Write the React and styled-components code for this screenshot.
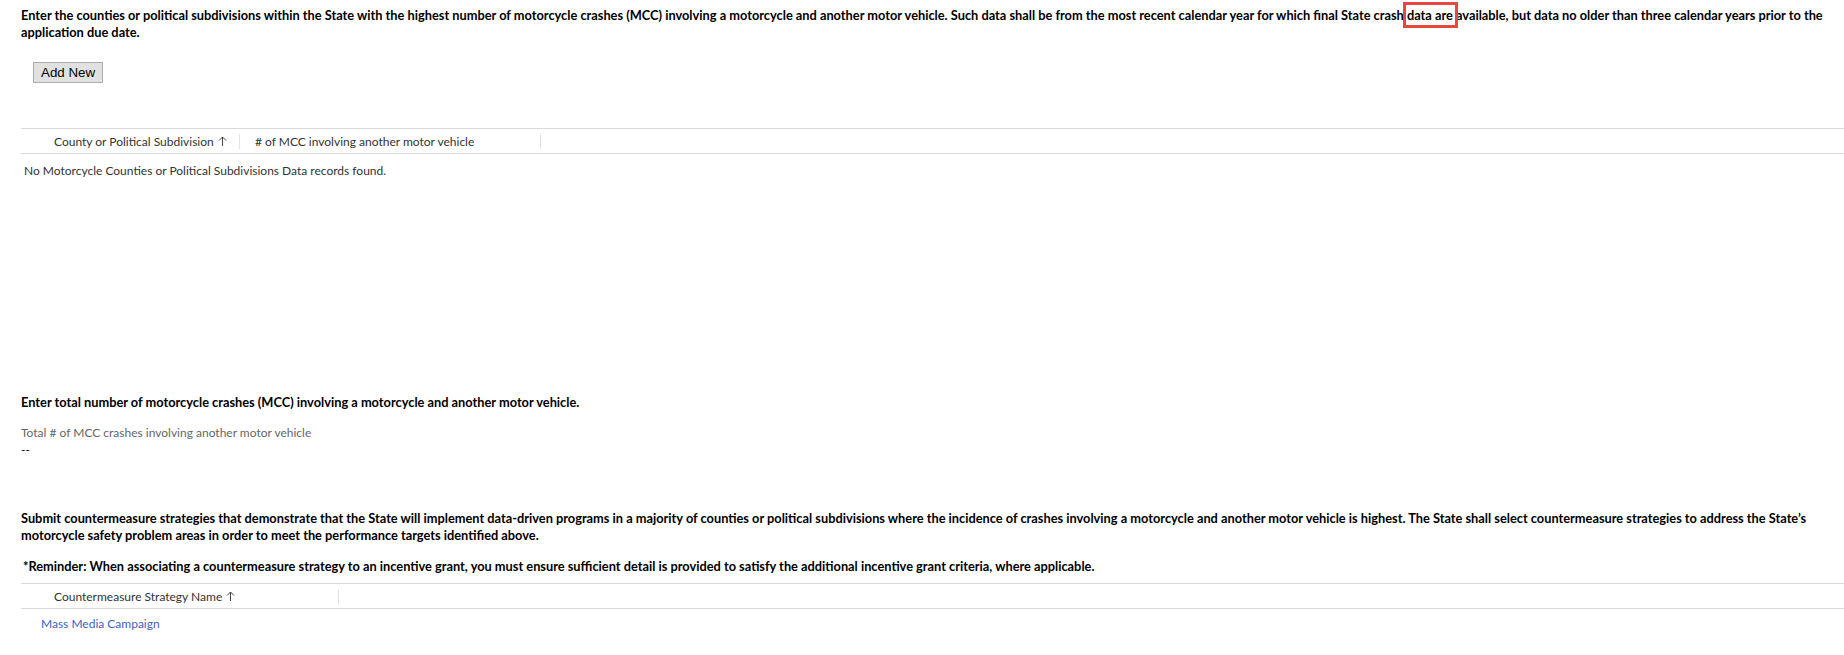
import React from "react";
import styled, { createGlobalStyle } from "styled-components";

const Global = createGlobalStyle`
  html, body { margin: 0; padding: 0; background: #fff; }
  body { font-family: Lato, "Open Sans", "Liberation Sans", sans-serif; color: #000; }
`;

const Page = styled.main`
  display: flex;
  flex-direction: column;
  padding: 7px 8px 0 21px;
`;

const Instruction = styled.p`
  margin: 0;
  margin-left: ${(p) => p.$indent || 0}px;
  margin-top: ${(p) => p.$top || 0}px;
  font-size: 12.8px;
  line-height: 17px;
  font-weight: 700;
  color: #000;
`;

const Mark = styled.span`
  position: relative;
  &::after {
    content: "";
    position: absolute;
    left: -4px;
    right: -5px;
    top: -5px;
    bottom: -5px;
    border: 3px solid #e8473f;
    pointer-events: none;
  }
`;

const ButtonRow = styled.div`
  display: flex;
  margin-top: 21px;
  padding-left: 12px;
`;

const Button = styled.button`
  font-family: "Liberation Sans", Arial, sans-serif;
  font-size: 13.33px;
  height: 21px;
  padding: 0 7px;
  background: #e1e1e1;
  border: 1px solid #adadad;
  color: #000;
  cursor: pointer;
`;

const Grid = styled.section`
  display: flex;
  flex-direction: column;
  margin-top: ${(p) => p.$top || 0}px;
`;

const HeaderRow = styled.div`
  display: flex;
  align-items: center;
  height: 24px;
  margin-right: -8px;
  border-top: 1px solid #d9d9d9;
  border-bottom: 1px solid #d9d9d9;
`;

const HeaderCell = styled.div`
  display: flex;
  align-items: center;
  gap: 4px;
  box-sizing: border-box;
  width: ${(p) => p.$width}px;
  height: 15px;
  padding-left: ${(p) => p.$pad}px;
  border-right: 1px solid #e2e2e2;
  font-size: 12px;
  color: #333;
  white-space: nowrap;
`;

const EmptyRow = styled.div`
  padding: 8px 3px;
  font-size: 12px;
  line-height: 17px;
  color: #333;
`;

const DataRow = styled.div`
  padding: 6px 20px;
  font-size: 12px;
  line-height: 17px;
`;

const Link = styled.a`
  color: #3f5fbf;
  text-decoration: none;
`;

const Field = styled.div`
  display: flex;
  flex-direction: column;
  margin-top: 13px;
  font-size: 12px;
  line-height: 17px;
`;

const FieldLabel = styled.span`
  color: #666;
`;

const FieldValue = styled.span`
  color: #000;
`;

const SortUp = () => (
  <svg width="9" height="10" viewBox="0 0 9 10" fill="none" stroke="#444" strokeWidth="1">
    <path d="M4.5 10V1M1 4.5L4.5 1L8 4.5" />
  </svg>
);

export default function App() {
  return (
    <>
      <Global />
      <Page>
        <Instruction>
          Enter the counties or political subdivisions within the State with the highest number of motorcycle crashes (MCC) involving a motorcycle and another motor vehicle. Such data shall be from the most recent calendar year for which final State crash <Mark>data are</Mark> available, but data no older than three calendar years prior to the application due date.
        </Instruction>
        <ButtonRow>
          <Button type="button">Add New</Button>
        </ButtonRow>
        <Grid $top={45}>
          <HeaderRow>
            <HeaderCell $width={219} $pad={33}>
              County or Political Subdivision <SortUp />
            </HeaderCell>
            <HeaderCell $width={301} $pad={15}>
              # of MCC involving another motor vehicle
            </HeaderCell>
          </HeaderRow>
          <EmptyRow>No Motorcycle Counties or Political Subdivisions Data records found.</EmptyRow>
        </Grid>

        <Instruction $top={207}>
          Enter total number of motorcycle crashes (MCC) involving a motorcycle and another motor vehicle.
        </Instruction>
        <Field>
          <FieldLabel>Total # of MCC crashes involving another motor vehicle</FieldLabel>
          <FieldValue>--</FieldValue>
        </Field>

        <Instruction $top={52}>
          Submit countermeasure strategies that demonstrate that the State will implement data-driven programs in a majority of counties or political subdivisions where the incidence of crashes involving a motorcycle and another motor vehicle is highest. The State shall select countermeasure strategies to address the State’s motorcycle safety problem areas in order to meet the performance targets identified above.
        </Instruction>
        <Instruction $top={14} $indent={2}>
          *Reminder: When associating a countermeasure strategy to an incentive grant, you must ensure sufficient detail is provided to satisfy the additional incentive grant criteria, where applicable.
        </Instruction>
        <Grid $top={8}>
          <HeaderRow>
            <HeaderCell $width={318} $pad={33}>
              Countermeasure Strategy Name <SortUp />
            </HeaderCell>
          </HeaderRow>
          <DataRow>
            <Link href="#">Mass Media Campaign</Link>
          </DataRow>
        </Grid>
      </Page>
    </>
  );
}
